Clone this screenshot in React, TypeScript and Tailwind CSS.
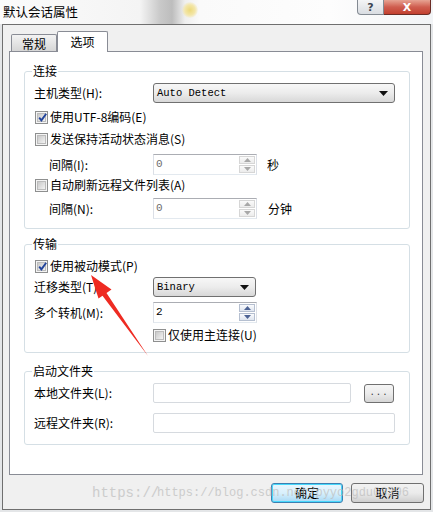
import React from 'react';

function Check({ checked }: { checked?: boolean }) {
  return (
    <span className="relative flex h-[13px] w-[13px] shrink-0 items-center justify-center border border-[#8e8f8f] bg-[#f4f4f4]">
      <span className="h-[9px] w-[9px] border border-[#bcbcbc] bg-linear-to-br from-[#c9c9c9] to-[#f3f3f3]" />
      {checked && (
        <svg className="absolute left-[1px] top-[0px]" width="11" height="11" viewBox="0 0 11 11">
          <path d="M2.2 5.6 L4.4 8.4 L9.2 1.8" stroke="#22449b" strokeWidth="1.9" fill="none" />
        </svg>
      )}
    </span>
  );
}

function Tri({ up, color }: { up?: boolean; color: string }) {
  return (
    <svg width="7" height="4" viewBox="0 0 7 4">
      {up ? <path d="M0 4 L3.5 0 L7 4 Z" fill={color} /> : <path d="M0 0 L3.5 4 L7 0 Z" fill={color} />}
    </svg>
  );
}

function Spin({ value, enabled }: { value: string; enabled?: boolean }) {
  const c = enabled ? '#4d6394' : '#a8a8a8';
  return (
    <div className="flex h-[21px] w-[104px] shrink-0 items-center border border-[#abadb3] border-l-[#dbdfe6] border-r-[#dbdfe6] border-b-[#e3e9ef] bg-white">
      <span
        className={
          enabled
            ? "flex-1 pl-[2px] font-['Liberation_Mono',monospace] text-[11px] leading-none text-black"
            : "flex-1 pl-[2px] font-['Liberation_Mono',monospace] text-[11px] leading-none text-[#6d6d6d]"
        }
      >
        {value}
      </span>
      <div className="mr-[1px] flex h-[17px] w-[16px] flex-col gap-[1px]">
        <div
          className={
            enabled
              ? 'flex flex-1 items-center justify-center border border-[#b5bfd0] bg-linear-to-b from-[#fafbfd] to-[#dfe5ef]'
              : 'flex flex-1 items-center justify-center border border-[#d6d6d6] bg-linear-to-b from-[#fafafa] to-[#ececec]'
          }
        >
          <Tri up color={c} />
        </div>
        <div
          className={
            enabled
              ? 'flex flex-1 items-center justify-center border border-[#b5bfd0] bg-linear-to-b from-[#fafbfd] to-[#dfe5ef]'
              : 'flex flex-1 items-center justify-center border border-[#d6d6d6] bg-linear-to-b from-[#fafafa] to-[#ececec]'
          }
        >
          <Tri color={c} />
        </div>
      </div>
    </div>
  );
}

function Select({ value, w }: { value: string; w: string }) {
  return (
    <div
      className={`${w} flex h-[20px] shrink-0 items-center justify-between rounded-[3px] border border-[#707070] bg-linear-to-b from-[#f7f7f7] via-[#ececec] to-[#d8d8d8] pl-[3px] pr-[6px]`}
    >
      <span className="font-['Liberation_Mono',monospace] text-[10.5px] leading-none text-black">{value}</span>
      <svg width="9" height="5" viewBox="0 0 9 5">
        <path d="M0 0 L9 0 L4.5 5 Z" fill="#111" />
      </svg>
    </div>
  );
}

function Group({ label, children, cls }: { label: string; children: React.ReactNode; cls: string }) {
  return (
    <div className={`relative ml-[14px] w-[386px] rounded-[3px] border border-[#d5dfe5] pl-[9px] ${cls}`}>
      <span className="absolute left-[7px] top-[-9px] bg-white px-[1px] text-[12px] leading-[16px] text-black">{label}</span>
      {children}
    </div>
  );
}

export default function App() {
  return (
    <div className="relative h-[512px] w-[433px] overflow-hidden bg-[#e4e6e8] font-['Noto_Sans_CJK_SC','Noto_Sans',sans-serif] text-[12px] text-black">
      {/* title bar */}
      <div className="flex h-[24px] w-[433px] items-start justify-between bg-[linear-gradient(90deg,#fbfbfb_0px,#f4f4f4_140px,#c9c9c9_160px,#bdbdbd_172px,#efefef_185px,#fafafa_200px,#fdfdfd_330px,#f2f4f6_433px)] pr-[2px]">
        <div className="relative flex h-[24px] items-center pl-[3px]">
          <span className="text-[12.5px] leading-[22px] text-black">默认会话属性</span>
        </div>
        <div className="flex h-[15px]">
          <div className="flex w-[27px] items-center justify-center rounded-bl-[4px] border border-t-0 border-[#838a92] bg-linear-to-b from-[#f4f5f6] to-[#d9dde2]">
            <span className="font-['DejaVu_Sans',sans-serif] text-[11px] font-bold leading-none text-[#3d4653]">?</span>
          </div>
          <div className="flex w-[47px] items-center justify-center rounded-br-[4px] border border-l-0 border-t-0 border-[#6b2c25] bg-linear-to-b from-[#e6a393] via-[#cf5d4f] to-[#c2402f]">
            <span className="font-['DejaVu_Sans',sans-serif] text-[11px] font-bold leading-none text-white">X</span>
          </div>
        </div>
      </div>
      {/* yellow blur spot */}
      <div className="pointer-events-none absolute left-[182px] top-[2px] h-[16px] w-[16px] rounded-full bg-[radial-gradient(circle,#ecd97a_0%,#f3e6a8_45%,rgba(250,250,250,0)_75%)]" />

      {/* body */}
      <div className="ml-[2px] flex h-[486px] w-[429px] flex-col border border-[#6f6f6f] bg-[#f0f0f0] pt-[6px]">
        {/* tabs */}
        <div className="ml-[6px] flex h-[20px] items-end pl-[2px]">
          <div className="flex h-[17px] w-[46px] items-center justify-center rounded-t-[2px] border border-b-0 border-[#898c95] bg-linear-to-b from-[#f3f3f3] to-[#d6d6d6] pt-[1px]">
            常规
          </div>
          <div className="relative z-10 mb-[-1px] flex h-[21px] w-[51px] items-center justify-center rounded-t-[2px] border border-b-0 border-[#898c95] bg-white pb-[1px]">
            选项
          </div>
        </div>
        {/* panel */}
        <div className="ml-[6px] flex h-[424px] w-[414px] flex-col border border-[#898c95] bg-white">
          <Group label="连接" cls="mt-[19px] pt-[11px] pb-[9px]">
            <div className="flex h-[20px] items-center">
              <span className="w-[119px]">主机类型(H):</span>
              <Select value="Auto Detect" w="w-[242px]" />
            </div>
            <div className="mt-[4px] flex h-[20px] items-center pl-[1px]">
              <Check checked />
              <span className="ml-[2px]">使用UTF-8编码(E)</span>
            </div>
            <div className="mt-[2px] flex h-[20px] items-center pl-[1px]">
              <Check />
              <span className="ml-[2px]">发送保持活动状态消息(S)</span>
            </div>
            <div className="mt-[5px] flex h-[21px] items-center">
              <span className="w-[119px] pl-[15px]">间隔(I):</span>
              <Spin value="0" />
              <span className="ml-[10px]">秒</span>
            </div>
            <div className="flex h-[20px] items-center pl-[1px]">
              <Check />
              <span className="ml-[2px]">自动刷新远程文件列表(A)</span>
            </div>
            <div className="mt-[3px] flex h-[21px] items-center">
              <span className="w-[119px] pl-[15px]">间隔(N):</span>
              <Spin value="0" />
              <span className="ml-[11px]">分钟</span>
            </div>
          </Group>

          <Group label="传输" cls="mt-[15px] pt-[11px] pb-[7px]">
            <div className="flex h-[20px] items-center pl-[1px]">
              <Check checked />
              <span className="ml-[2px]">使用被动模式(P)</span>
            </div>
            <div className="mt-[1px] flex h-[20px] items-center">
              <span className="w-[119px]">迁移类型(T):</span>
              <Select value="Binary" w="w-[103px]" />
            </div>
            <div className="mt-[5px] flex h-[21px] items-center">
              <span className="w-[119px]">多个转机(M):</span>
              <Spin value="2" enabled />
            </div>
            <div className="mt-[2px] flex h-[20px] items-center pl-[119px]">
              <Check />
              <span className="ml-[2px]">仅使用主连接(U)</span>
            </div>
          </Group>

          <Group label="启动文件夹" cls="mt-[18px] pt-[11px] pb-[11px]">
            <div className="flex h-[20px] items-center">
              <span className="w-[119px]">本地文件夹(L):</span>
              <div className="h-[20px] w-[198px] rounded-[2px] border border-[#d6dadf] bg-white" />
              <div className="ml-[13px] flex h-[19px] w-[30px] items-center justify-center rounded-[3px] border border-[#707070] bg-linear-to-b from-[#f5f5f5] via-[#ebebeb] to-[#d6d6d6]">
                <span className="font-['Liberation_Mono',monospace] text-[9px] leading-none tracking-[1px] text-[#333]">...</span>
              </div>
            </div>
            <div className="mt-[10px] flex h-[20px] items-center">
              <span className="w-[119px]">远程文件夹(R):</span>
              <div className="h-[20px] w-[242px] rounded-[2px] border border-[#d6dadf] bg-white" />
            </div>
          </Group>
        </div>

        {/* buttons */}
        <div className="mt-[8px] flex justify-end gap-[8px] pr-[6px]">
          <div className="flex h-[20px] w-[72px] items-center justify-center rounded-[3px] border border-[#3c7fb1] bg-linear-to-b from-[#eaf6fd] via-[#d9f0fc] to-[#a7d9f5] shadow-[inset_0_0_0_1px_#48d8fb]">
            确定
          </div>
          <div className="flex h-[20px] w-[73px] items-center justify-center rounded-[3px] border border-[#707070] bg-linear-to-b from-[#f2f2f2] via-[#ebebeb] to-[#cfcfcf]">
            取消
          </div>
        </div>
      </div>

      {/* watermark overlay */}
      <div className="pointer-events-none absolute left-[92px] top-[483px] font-['Liberation_Mono',monospace] text-[14px] leading-[20px] text-[#c4c4c4] opacity-80">
        https://
      </div>
      <div className="pointer-events-none absolute left-[157px] top-[485px] font-['Liberation_Mono',monospace] text-[12px] leading-[16px] text-[#bdbdbd] opacity-70">
        https://blog.csdn.net/pyyo2gdu03396
      </div>

      {/* red arrow */}
      <svg className="pointer-events-none absolute left-0 top-0" width="433" height="512" viewBox="0 0 433 512">
        <polygon
          points="91,275 111.5,289.5 106.5,293 148,356 102.5,295.8 98.5,298.5"
          fill="#ee2b22"
        />
      </svg>
    </div>
  );
}
